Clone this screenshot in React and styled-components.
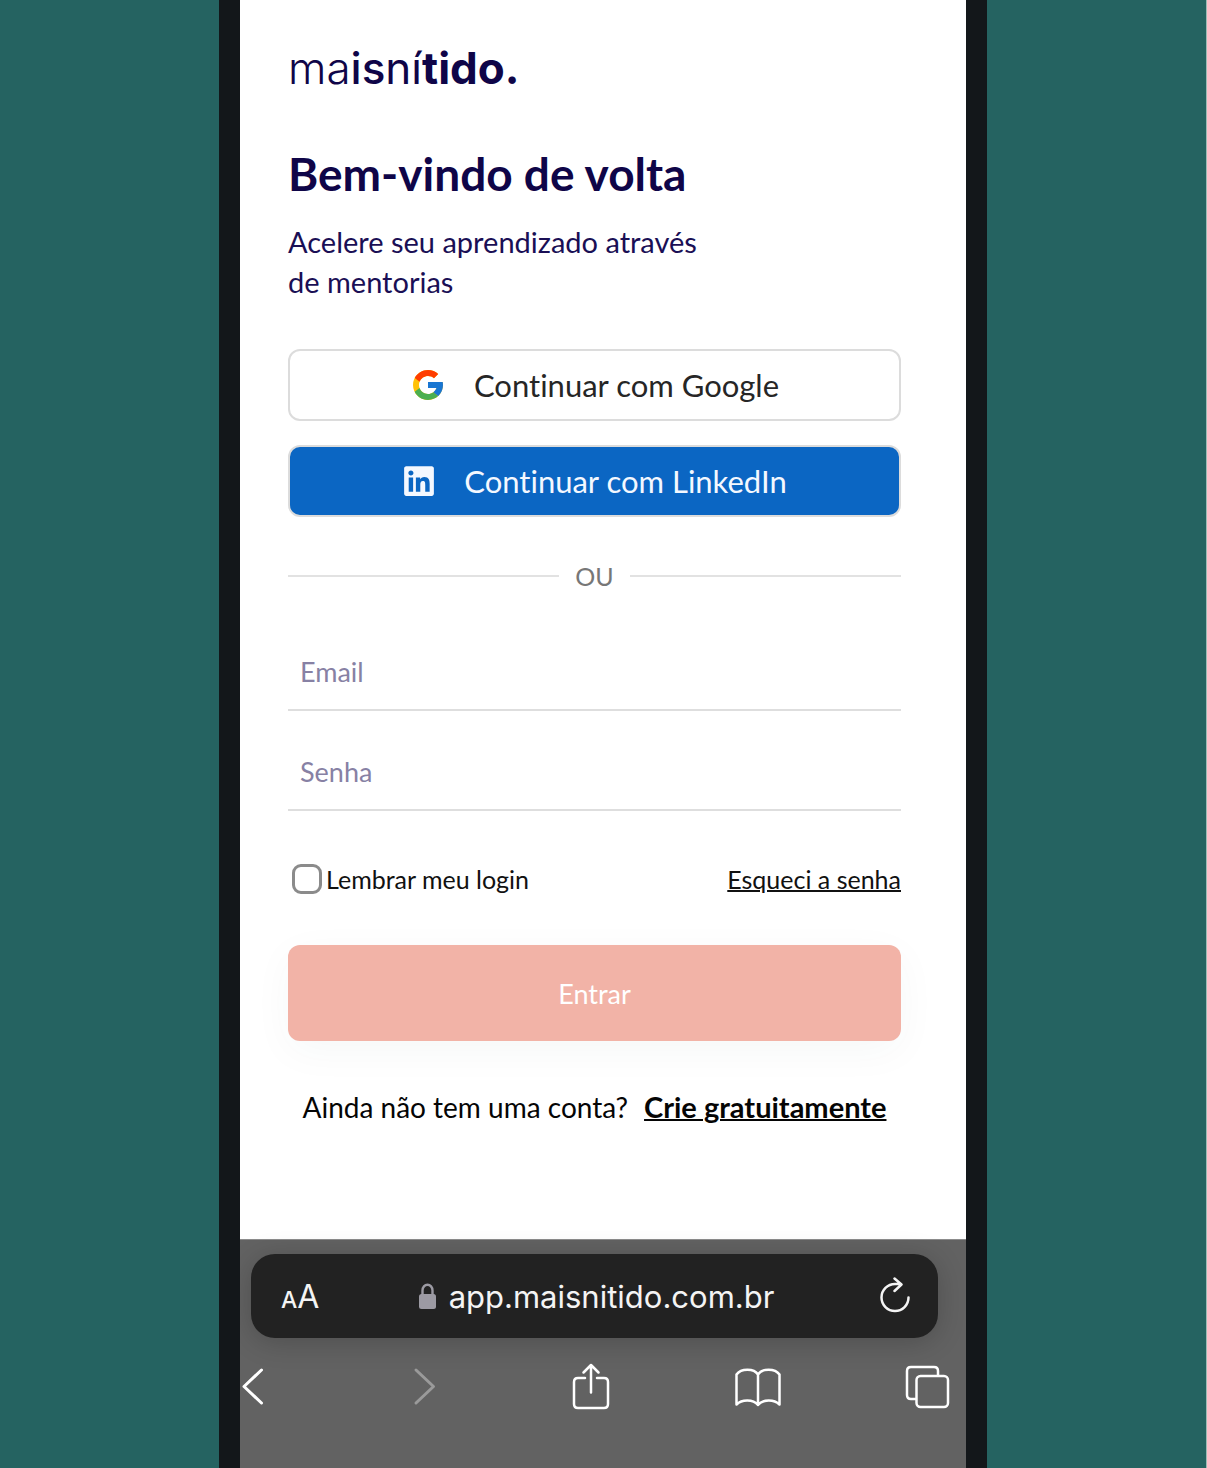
import React from "react";
import styled, { createGlobalStyle } from "styled-components";
import { FcGoogle } from "react-icons/fc";
import { FaLinkedin } from "react-icons/fa";

const GlobalStyle = createGlobalStyle`
  * { box-sizing: border-box; }
  body { margin: 0; background: #256361; }
  button, input { font: inherit; }
`;

const Stage = styled.div`
  display: flex;
  justify-content: center;
  min-height: 100vh;
  background: #256361;
  border-right: 1px solid #9dbcb6;
  font-family: Lato, "Open Sans", sans-serif;
  font-variant-ligatures: none;
`;

const Phone = styled.div`
  display: flex;
  flex-direction: column;
  width: 100%;
  max-width: 768px;
  border: solid #13171a;
  border-width: 0 21px;
  background: #fff;
  overflow: hidden;
`;

const Page = styled.main`
  flex: 1;
  display: flex;
  flex-direction: column;
  padding: 40px 65px 40px 48px;
`;

const Logo = styled.div`
  font-family: Inter, sans-serif;
  font-size: 44px;
  line-height: 56px;
  font-weight: 300;
  color: #0f0548;
`;

const LogoPart = styled.span`
  font-weight: ${(p) => p.$weight};
`;

const Title = styled.h1`
  margin: 46px 0 0;
  font-size: 46px;
  line-height: 64px;
  font-weight: 700;
  color: #0f0548;
`;

const Subtitle = styled.p`
  margin: 16px 0 0;
  max-width: 440px;
  font-size: 29px;
  line-height: 40px;
  color: #1a0f55;
`;

const Form = styled.form`
  display: flex;
  flex-direction: column;
`;

const SocialList = styled.div`
  display: flex;
  flex-direction: column;
  gap: 24px;
  margin-top: 47px;
`;

const SocialButton = styled.button`
  display: flex;
  align-items: center;
  justify-content: center;
  gap: 28px;
  height: 72px;
  padding: 0;
  border: 2px solid #dcdcdc;
  border-radius: 12px;
  background: ${(p) => p.$background};
  color: ${(p) => p.$color};
  font-size: 31px;
  font-variant-ligatures: none;
`;

const Divider = styled.div`
  display: flex;
  align-items: center;
  gap: 16px;
  margin-top: 39px;
  font-size: 25px;
  line-height: 40px;
  color: #777;

  &::before,
  &::after {
    content: "";
    flex: 1;
    height: 2px;
    background: #e2e2e2;
  }
`;

const Fields = styled.div`
  display: flex;
  flex-direction: column;
  gap: 24px;
  margin-top: 39px;
`;

const Field = styled.input`
  width: 100%;
  height: 76px;
  padding: 0 12px 2px;
  border: 0;
  border-bottom: 2px solid #dedede;
  border-radius: 0;
  background: transparent;
  color: #1a0f55;
  font-size: 27px;

  &::placeholder {
    color: #8781a4;
    opacity: 1;
  }
`;

const Options = styled.div`
  display: flex;
  align-items: center;
  justify-content: space-between;
  margin-top: 48px;
  font-size: 25px;
  line-height: 40px;
  color: #111;
`;

const Remember = styled.label`
  display: flex;
  align-items: center;
  gap: 4px;
  padding-left: 4px;
`;

const Checkbox = styled.input`
  appearance: none;
  width: 30px;
  height: 30px;
  margin: 0;
  border: 3px solid #8b8b8b;
  border-radius: 9px;
  background: #fff;
`;

const TextLink = styled.a`
  color: inherit;
  font-weight: ${(p) => (p.$strong ? 700 : 400)};
  font-size: ${(p) => (p.$strong ? "29px" : "inherit")};
  text-decoration: underline;
  text-decoration-thickness: 2px;
`;

const Submit = styled.button`
  height: 96px;
  margin-top: 46px;
  border: 0;
  border-radius: 12px;
  background: #f2b3a7;
  box-shadow: 0 10px 40px rgba(20, 80, 75, 0.04);
  color: #fff;
  font-size: 27px;
`;

const SignUp = styled.p`
  display: flex;
  align-items: baseline;
  justify-content: center;
  gap: 16px;
  margin: 46px 0 0;
  font-size: 28px;
  line-height: 40px;
  color: #050505;
`;

const Browser = styled.footer`
  height: 229px;
  padding-top: 14px;
  border-top: 1px solid #8c8c8c;
  background: #626262;
`;

const AddressBar = styled.div`
  display: grid;
  grid-template-columns: 1fr auto 1fr;
  align-items: center;
  height: 84px;
  margin: 0 28px 0 11px;
  padding: 0 27px 0 30px;
  border-radius: 24px;
  background: #222;
  box-shadow: 0 4px 28px rgba(0, 0, 0, 0.2);
  color: #f4f4f4;
  font-family: Inter, sans-serif;
`;

const BarButton = styled.button`
  display: flex;
  align-items: baseline;
  justify-self: ${(p) => p.$side};
  padding: 0;
  border: 0;
  background: none;
  color: inherit;
  font-size: 32px;
`;

const SmallA = styled.span`
  font-size: 23px;
  font-weight: 500;
`;

const Address = styled.div`
  display: flex;
  align-items: center;
  gap: 12px;
  font-size: 31px;
`;

const Toolbar = styled.nav`
  display: flex;
  justify-content: space-between;
  margin: 25px 15px 0 -12px;
`;

const ToolButton = styled.button`
  display: flex;
  width: 48px;
  height: 48px;
  padding: 0;
  border: 0;
  background: none;
  color: ${(p) => (p.disabled ? "#9a9a9a" : "#fff")};
`;

const Stroke = styled.svg`
  display: block;
  fill: none;
  stroke: currentColor;
  stroke-width: 3;
  stroke-linecap: round;
  stroke-linejoin: round;
`;

const ToolIcon = ({ children }) => (
  <Stroke width="48" height="48" viewBox="0 0 48 48" aria-hidden="true">
    {children}
  </Stroke>
);

export default function App() {
  return (
    <>
      <GlobalStyle />
      <Stage>
        <Phone>
          <Page>
            <Logo>
              ma<LogoPart $weight={500}>is</LogoPart>
              <LogoPart $weight={400}>ní</LogoPart>
              <LogoPart $weight={700}>tido.</LogoPart>
            </Logo>
            <Title>Bem-vindo de volta</Title>
            <Subtitle>Acelere seu aprendizado através de mentorias</Subtitle>
            <SocialList>
              <SocialButton type="button" $background="#fff" $color="#262626">
                <FcGoogle size={36} aria-hidden="true" />
                Continuar com Google
              </SocialButton>
              <SocialButton type="button" $background="#0b66c3" $color="#f4f8ff">
                <FaLinkedin size={34} aria-hidden="true" />
                Continuar com LinkedIn
              </SocialButton>
            </SocialList>
            <Divider>OU</Divider>
            <Form onSubmit={(e) => e.preventDefault()}>
              <Fields>
                <Field type="email" placeholder="Email" aria-label="Email" />
                <Field type="password" placeholder="Senha" aria-label="Senha" />
              </Fields>
              <Options>
                <Remember>
                  <Checkbox type="checkbox" />
                  Lembrar meu login
                </Remember>
                <TextLink href="#senha">Esqueci a senha</TextLink>
              </Options>
              <Submit type="submit">Entrar</Submit>
            </Form>
            <SignUp>
              Ainda não tem uma conta?
              <TextLink href="#criar" $strong>Crie gratuitamente</TextLink>
            </SignUp>
          </Page>
          <Browser>
            <AddressBar>
              <BarButton type="button" $side="start">
                <SmallA>A</SmallA>A
              </BarButton>
              <Address>
                <svg width="19" height="26" viewBox="0 0 19 26" aria-hidden="true">
                  <path d="M4.5 12V7.5a5 5.800 0 0 1 10 0V12" fill="none" stroke="#9c9aa3" strokeWidth="2.4" />
                  <rect x="1" y="11" width="17" height="15" rx="2.5" fill="#9c9aa3" />
                </svg>
                app.maisnitido.com.br
              </Address>
              <BarButton type="button" $side="end" aria-label="Recarregar">
                <Stroke width="32" height="38" viewBox="0 0 32 38" aria-hidden="true">
                  <path d="M29.500 20.500A13.500 13.500 0 1 1 16 7H22M15.500 1.500l7 6-7 6.500" strokeWidth="2.500" />
                </Stroke>
              </BarButton>
            </AddressBar>
            <Toolbar aria-label="Navegador">
              <ToolButton type="button" aria-label="Voltar">
                <ToolIcon><path d="M33.500 7 16 23.500 33.500 40" /></ToolIcon>
              </ToolButton>
              <ToolButton type="button" aria-label="Avançar" disabled>
                <ToolIcon><path d="M19 7 36.500 23.500 19 40" /></ToolIcon>
              </ToolButton>
              <ToolButton type="button" aria-label="Compartilhar">
                <ToolIcon>
                  <path d="M19 15H12q-4 0-4 4V41q0 4 4 4H38q4 0 4-4V19q0-4-4-4H31M25 29.500V2.500M17.500 9.500 25 2l7.500 7.500" strokeWidth="2.500" />
                </ToolIcon>
              </ToolButton>
              <ToolButton type="button" aria-label="Favoritos">
                <ToolIcon>
                  <path d="M24 11.500C20 5 7 5 2.500 11.500V41.500C8 36 19 36 24 42C29 36 40 36 45.500 41.500V11.500C41 5 28 5 24 11.500V42" strokeWidth="2.500" />
                </ToolIcon>
              </ToolButton>
              <ToolButton type="button" aria-label="Abas">
                <ToolIcon>
                  <path d="M12.500 36H8q-4 0-4-4V8q0-4 4-4H31q4 0 4 4V12.500" strokeWidth="2.500" />
                  <rect x="13.500" y="13" width="31.500" height="31" rx="4" strokeWidth="2.500" />
                </ToolIcon>
              </ToolButton>
            </Toolbar>
          </Browser>
        </Phone>
      </Stage>
    </>
  );
}
